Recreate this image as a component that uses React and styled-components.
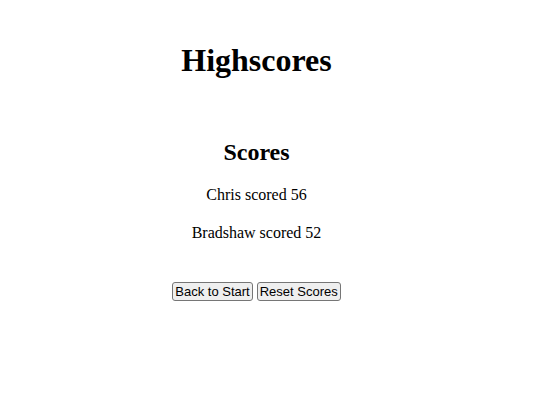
import React from "react";
import styled, { createGlobalStyle } from "styled-components";

const GlobalStyle = createGlobalStyle`
  body {
    margin: 0;
    background: #fff;
    color: #000;
    font-family: "Liberation Serif", "Times New Roman", serif;
    font-size: 16px;
    line-height: 18px;
  }
`;

const Page = styled.main`
  display: flex;
  flex-direction: column;
  align-items: center;
  padding: 42px 37px 0 0;
  text-align: center;
`;

const Title = styled.h1`
  margin: 0 0 56px;
  font-size: 32px;
  line-height: 36px;
`;

const Subtitle = styled.h2`
  margin: 0 0 16px;
  font-size: 24px;
  line-height: 36px;
`;

const ScoreList = styled.section`
  display: flex;
  flex-direction: column;
  align-items: center;
`;

const Score = styled.p`
  margin: 0 0 20px;
`;

const Actions = styled.div`
  display: flex;
  gap: 4px;
  margin-top: 20px;
`;

const Button = styled.button`
  box-sizing: border-box;
  margin: 0;
  padding: 1px 2px;
  border: 1px solid #767676;
  border-radius: 3px;
  background: #efefef;
  color: #000;
  font-family: "Liberation Sans", Arial, sans-serif;
  font-size: 13px;
  line-height: 15px;
`;

const scores = [
  { name: "Chris", points: 56 },
  { name: "Bradshaw", points: 52 },
];

export default function App() {
  return (
    <>
      <GlobalStyle />
      <Page>
        <Title>Highscores</Title>
        <ScoreList>
          <Subtitle>Scores</Subtitle>
          {scores.map(({ name, points }) => (
            <Score key={name}>{`${name} scored ${points}`}</Score>
          ))}
        </ScoreList>
        <Actions>
          <Button type="button">Back to Start</Button>
          <Button type="button">Reset Scores</Button>
        </Actions>
      </Page>
    </>
  );
}
